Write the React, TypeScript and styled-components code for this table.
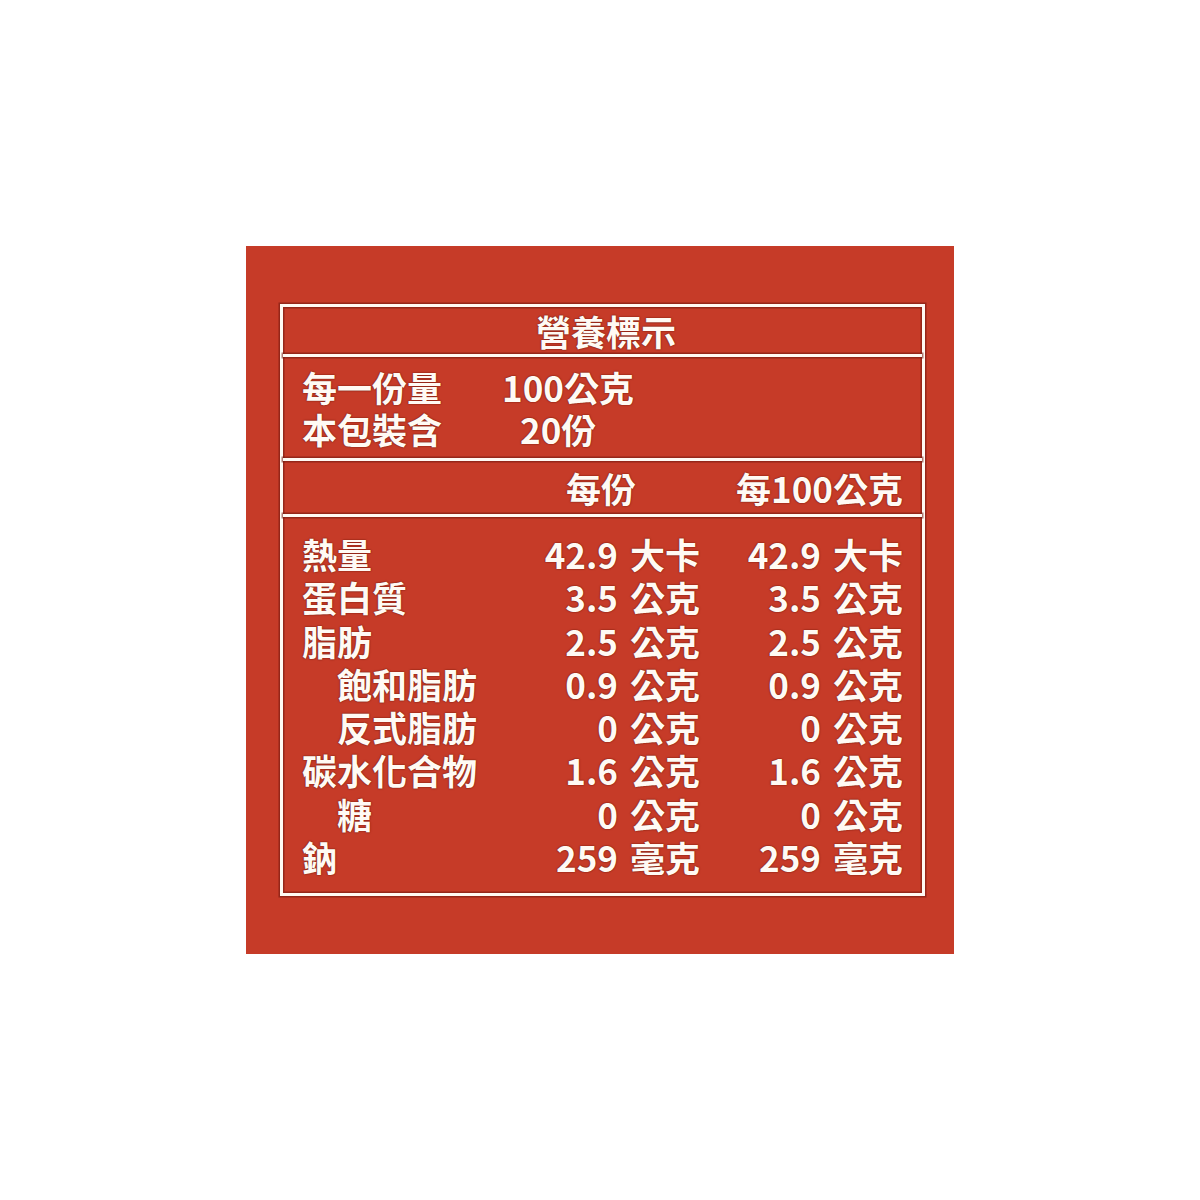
import React from "react";
import styled, { createGlobalStyle } from "styled-components";

const GlobalStyle = createGlobalStyle`
  html, body { margin: 0; padding: 0; background: #ffffff; }
  * { box-sizing: border-box; }
`;

const Page = styled.div`
  width: 1200px;
  height: 1200px;
  display: flex;
  align-items: center;
  justify-content: center;
  background: #ffffff;
`;

const Panel = styled.div`
  width: 708px;
  height: 708px;
  background: #c63b28;
  padding: 58px 29px 58px 34px;
`;

const Frame = styled.div`
  height: 100%;
  border: 3px solid #fff9f3;
  box-shadow: 0 0 0 1.5px rgba(110, 22, 12, 0.55),
    inset 0 0 0 1.5px rgba(110, 22, 12, 0.55);
  display: flex;
  flex-direction: column;
  color: #fffaf4;
  font-family: "Noto Sans CJK TC", "Noto Sans CJK SC", "Noto Sans", sans-serif;
  font-weight: 700;
  font-size: 35px;
  text-shadow: 0 0 1px rgba(90, 15, 5, 0.95), 0 0 2px rgba(90, 15, 5, 0.6);
`;

const Divider = styled.div`
  height: 3px;
  flex: none;
  background: #fff9f3;
  box-shadow: 0 0 0 1.5px rgba(110, 22, 12, 0.55);
`;

const TitleSection = styled.div`
  line-height: 47px;
  height: 47px;
  text-align: center;
  padding-left: 7px;
`;

const ServingSection = styled.div`
  padding: 9px 19px 9px 19px;
  line-height: 41.5px;
`;

const ServingRow = styled.div`
  display: grid;
  grid-template-columns: 200px auto;
`;

const ServingValue = styled.span<{ $offset?: number }>`
  padding-left: ${(p) => p.$offset ?? 0}px;
`;

const ColumnGrid = styled.div`
  display: grid;
  grid-template-columns: 1fr 200px 203px;
`;

const HeaderSection = styled(ColumnGrid)`
  line-height: 53px;
  height: 53px;
  padding: 0 19px;
`;

const HeaderCell = styled.div<{ $inset?: number }>`
  text-align: right;
  padding-right: ${(p) => p.$inset ?? 0}px;
`;

const NutrientSection = styled.div`
  flex: 1;
  padding: 15px 19px 0 19px;
  line-height: 43.3px;
`;

const NutrientRow = styled(ColumnGrid)``;

const Name = styled.div<{ $indent?: boolean }>`
  padding-left: ${(p) => (p.$indent ? 35 : 0)}px;
  white-space: nowrap;
`;

const Value = styled.div`
  text-align: right;
  white-space: nowrap;
`;

const Unit = styled.span`
  margin-left: 12px;
`;

type Nutrient = { name: string; indent?: boolean; v: string; unit: string };

const nutrients: Nutrient[] = [
  { name: "熱量", v: "42.9", unit: "大卡" },
  { name: "蛋白質", v: "3.5", unit: "公克" },
  { name: "脂肪", v: "2.5", unit: "公克" },
  { name: "飽和脂肪", indent: true, v: "0.9", unit: "公克" },
  { name: "反式脂肪", indent: true, v: "0", unit: "公克" },
  { name: "碳水化合物", v: "1.6", unit: "公克" },
  { name: "糖", indent: true, v: "0", unit: "公克" },
  { name: "鈉", v: "259", unit: "毫克" },
];

export default function App() {
  return (
    <>
      <GlobalStyle />
      <Page>
        <Panel>
          <Frame>
            <TitleSection>營養標示</TitleSection>
            <Divider />
            <ServingSection>
              <ServingRow>
                <span>每一份量</span>
                <ServingValue>100公克</ServingValue>
              </ServingRow>
              <ServingRow>
                <span>本包裝含</span>
                <ServingValue $offset={18}>20份</ServingValue>
              </ServingRow>
            </ServingSection>
            <Divider />
            <HeaderSection>
              <div />
              <HeaderCell $inset={64}>每份</HeaderCell>
              <HeaderCell>每100公克</HeaderCell>
            </HeaderSection>
            <Divider />
            <NutrientSection>
              {nutrients.map((n) => (
                <NutrientRow key={n.name}>
                  <Name $indent={n.indent}>{n.name}</Name>
                  <Value>
                    {n.v}
                    <Unit>{n.unit}</Unit>
                  </Value>
                  <Value>
                    {n.v}
                    <Unit>{n.unit}</Unit>
                  </Value>
                </NutrientRow>
              ))}
            </NutrientSection>
          </Frame>
        </Panel>
      </Page>
    </>
  );
}
